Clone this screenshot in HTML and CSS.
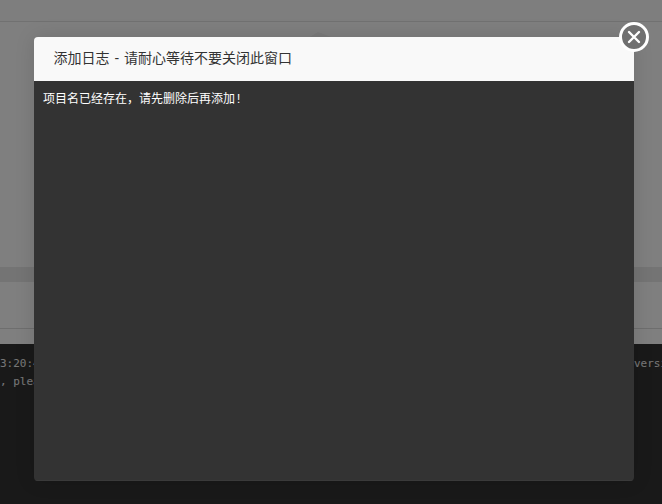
FILE: index.html
```html
<!DOCTYPE html>
<html lang="zh">
<head>
<meta charset="utf-8">
<title>添加日志</title>
<link rel="stylesheet" href="styles.css">
</head>
<body>
<div class="page">
  <div class="top"></div>
  <div class="main">
    <svg class="blob" viewBox="0 0 40 16" width="40" height="16"><path d="M8 16L18 10L34 16Z"/></svg>
  </div>
  <div class="band"></div>
  <div class="bar"></div>
  <div class="tail"></div>
  <div class="console">
    <div class="log"><span>3:20:45</span><span class="right">version</span></div>
    <div class="log"><span>, please</span></div>
  </div>
</div>
<div class="overlay"></div>
<section class="modal">
  <header class="modal-head">添加日志 - 请耐心等待不要关闭此窗口</header>
  <div class="modal-body">项目名已经存在&#xFF0C;请先删除后再添加!</div>
</section>
<button class="close" aria-label="关闭">
  <svg viewBox="0 0 14 14" width="14" height="14"><path d="M2 2L12 12M12 2L2 12"/></svg>
</button>
</body>
</html>
```
FILE: styles.css
```css
html, body { margin: 0; height: 100%; overflow: hidden; }
body { width: 662px; height: 504px; position: relative; background: #fff; }
.page { display: flex; flex-direction: column; height: 504px; }
.top { height: 21px; background: #fdfdfd; border-bottom: 1px solid #e2e2e2; }
.main { height: 245px; background: #fff; overflow: hidden; }
.blob { display: block; margin: 0 0 0 300px; }
.blob path { fill: #f4f4f4; }
.band { height: 15px; background: #e8e8e8; }
.bar { height: 46px; background: #fff; border-bottom: 1px solid #ddd; }
.tail { height: 15px; background: #fff; }
.console { flex: 1; background: #333; color: #eee; font: 11px/18px "DejaVu Sans Mono", monospace; padding-top: 11px; overflow: hidden; }
.log { display: flex; white-space: nowrap; }
.right { margin-left: auto; width: 28px; overflow: hidden; }
.overlay { position: absolute; inset: 0; background: rgba(0,0,0,.5); }
.modal { position: absolute; left: 34px; top: 37px; width: 600px; height: 444px; display: flex; flex-direction: column; border-radius: 4px; overflow: hidden; box-shadow: 0 0 20px rgba(0,0,0,.12); }
.modal-head { height: 44px; flex: none; box-sizing: border-box; padding-left: 19.5px; background: #f9f9f9; color: #333; font: 14px/42px "Liberation Sans", "Noto Sans CJK SC", sans-serif; word-spacing: 1px; }
.modal-body { flex: 1; background: #333; color: #fff; padding: 10px 9px; font: 12px/18px "Liberation Mono", "Noto Sans CJK SC", monospace; border-bottom: 1px solid #3a3a3a; }
.close { position: absolute; left: 619px; top: 22px; width: 30px; height: 30px; box-sizing: border-box; padding: 0; display: flex; align-items: center; justify-content: center; border: 3px solid #fff; border-radius: 50%; background: #707070; }
.close path { fill: none; stroke: #fff; stroke-width: 2.4; stroke-linecap: round; }
```
